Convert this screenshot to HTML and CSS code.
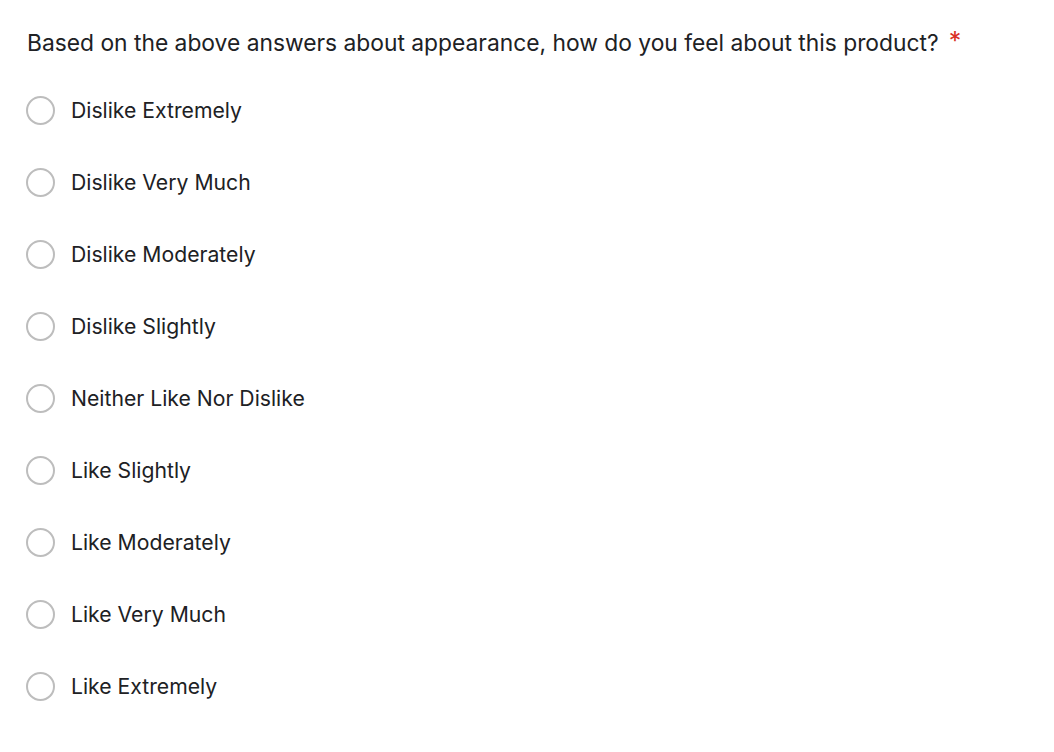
FILE: index.html
```html
<!DOCTYPE html>
<html>
<head>
<meta charset="utf-8">
<link rel="stylesheet" href="styles.css">
</head>
<body>
<div class="question">
  <div class="title">Based on the above answers about appearance, how do you feel about this product?<span class="req">*</span></div>
  <div class="options">
    <label class="opt"><span class="radio"></span><span class="label">Dislike Extremely</span></label>
    <label class="opt"><span class="radio"></span><span class="label">Dislike Very Much</span></label>
    <label class="opt"><span class="radio"></span><span class="label">Dislike Moderately</span></label>
    <label class="opt"><span class="radio"></span><span class="label">Dislike Slightly</span></label>
    <label class="opt"><span class="radio"></span><span class="label">Neither Like Nor Dislike</span></label>
    <label class="opt"><span class="radio"></span><span class="label">Like Slightly</span></label>
    <label class="opt"><span class="radio"></span><span class="label">Like Moderately</span></label>
    <label class="opt"><span class="radio"></span><span class="label">Like Very Much</span></label>
    <label class="opt"><span class="radio"></span><span class="label">Like Extremely</span></label>
  </div>
</div>
</body>
</html>
```
FILE: styles.css
```css
html, body {
  margin: 0;
  padding: 0;
  background: #ffffff;
}
body {
  font-family: Inter, "Noto Sans", sans-serif;
  color: #202124;
}
.question {
  padding: 25px 26px 0 26px;
}
.title {
  font-size: 22.8px;
  line-height: 34px;
  padding-left: 1px;
}
.req {
  color: #d93025;
  margin-left: 10px;
  position: relative;
  top: -1px;
  font-size: 25px;
}
.options {
  display: flex;
  flex-direction: column;
  margin-top: 14px;
}
.opt {
  display: flex;
  align-items: center;
  height: 72px;
}
.radio {
  width: 25px;
  height: 25px;
  border: 2.5px solid #bdbdbd;
  border-radius: 50%;
  flex: none;
}
.label {
  font-size: 21.2px;
  margin-left: 16px;
}
```
